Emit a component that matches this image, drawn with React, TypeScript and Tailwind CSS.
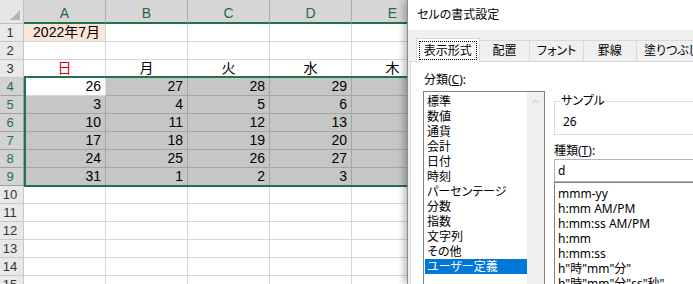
import { ChevronUp } from 'lucide-react';

const COLS = ['A', 'B', 'C', 'D', 'E', 'F'];
const DAYS = ['日', '月', '火', '水', '木', '金'];
const WEEKS = [
  [26, 27, 28, 29, 30, 1],
  [3, 4, 5, 6, 7, 8],
  [10, 11, 12, 13, 14, 15],
  [17, 18, 19, 20, 21, 22],
  [24, 25, 26, 27, 28, 29],
  [31, 1, 2, 3, 4, 5],
];
const CATEGORIES = ['標準', '数値', '通貨', '会計', '日付', '時刻', 'パーセンテージ', '分数', '指数', '文字列', 'その他', 'ユーザー定義'];
const FORMATS = ['mmm-yy', 'h:mm AM/PM', 'h:mm:ss AM/PM', 'h:mm', 'h:mm:ss', 'h"時"mm"分"', 'h"時"mm"分"ss"秒"'];
const TABS = [
  { label: '表示形式', w: 'w-[65px]' },
  { label: '配置', w: 'w-[52px]' },
  { label: 'フォント', w: 'w-[55px]' },
  { label: '罫線', w: 'w-[54px]' },
  { label: '塗りつぶし', w: 'w-[72px]' },
];

function RowHead({ n, selected }: { n: number; selected?: boolean }) {
  return (
    <div
      className={`w-[24px] shrink-0 h-[18px] border-r border-b text-[13px] leading-[17px] text-center pr-[3px] ${
        selected ? 'bg-[#d2d2d2] text-[#217346] border-[#9f9f9f]' : 'bg-[#e9e9e9] text-[#333] border-[#c8c8c8]'
      }`}
    >
      {n}
    </div>
  );
}

type Kind = 'plain' | 'sel' | 'peach';

function Cell({ children, kind = 'plain', className = '' }: { children?: React.ReactNode; kind?: Kind; className?: string }) {
  const tone =
    kind === 'sel'
      ? 'bg-[#c6c6c6] border-[#a5a5a5]'
      : kind === 'peach'
        ? 'bg-[#fce4d6] border-[#d6d6d6]'
        : 'bg-white border-[#d6d6d6]';
  return (
    <div className={`w-[82px] shrink-0 h-[18px] border-r border-b px-[4px] leading-[17px] whitespace-nowrap overflow-hidden ${tone} ${className}`}>
      {children}
    </div>
  );
}

function Sheet() {
  return (
    <div className="font-['Liberation_Sans','Noto_Sans_CJK_JP',sans-serif] text-[14px] text-black">
      {/* column headers */}
      <div className="flex h-[24px]">
        <div className="w-[24px] shrink-0 bg-[#e6e6e6] border-r border-b border-[#c0c0c0] flex items-end justify-end p-[3px]">
          <svg width="10" height="10" viewBox="0 0 10 10">
            <path d="M10 0 L10 10 L0 10 Z" fill="#b4b4b4" />
          </svg>
        </div>
        {COLS.map((c) => (
          <div
            key={c}
            className="w-[82px] shrink-0 bg-[#d6d6d6] border-r border-[#ababab] border-b-2 border-b-[#217346] text-center text-[#1f6a42] leading-[16px] pt-[5px]"
          >
            {c}
          </div>
        ))}
      </div>

      {/* row 1 */}
      <div className="flex">
        <RowHead n={1} />
        <Cell kind="peach" className="text-right pr-[5px]">2022年7月</Cell>
        {COLS.slice(1).map((c) => (
          <Cell key={c} />
        ))}
      </div>

      {/* row 2 */}
      <div className="flex">
        <RowHead n={2} />
        {COLS.map((c) => (
          <Cell key={c} />
        ))}
      </div>

      {/* row 3: weekdays */}
      <div className="flex">
        <RowHead n={3} />
        {DAYS.map((d, i) => (
          <Cell key={d} className={`text-center ${i === 0 ? 'text-[#e00000]' : ''}`}>
            {d}
          </Cell>
        ))}
      </div>

      {/* rows 4-9: dates */}
      {WEEKS.map((week, r) => (
        <div key={r} className="flex">
          <RowHead n={r + 4} selected />
          {week.map((v, i) => (
            <Cell key={i} kind={r === 0 && i === 0 ? 'plain' : 'sel'} className="text-right">
              {i < 5 ? v : ''}
            </Cell>
          ))}
        </div>
      ))}

      {/* rows 10-15 */}
      {[10, 11, 12, 13, 14, 15].map((n) => (
        <div key={n} className="flex">
          <RowHead n={n} />
          {COLS.map((c) => (
            <Cell key={c} />
          ))}
        </div>
      ))}
    </div>
  );
}

function FormatDialog() {
  return (
    <div className="absolute left-[407px] top-0 w-[300px] h-[284px] flex flex-col bg-[#f0f0f0] border-l border-[#8c8c8c] shadow-[-3px_0_7px_rgba(0,0,0,0.28)] font-['Noto_Sans','Noto_Sans_CJK_JP',sans-serif] text-[12px] text-black [font-feature-settings:'palt']">
      <div className="h-[30px] shrink-0 bg-white flex items-center pl-[9px] text-[12px]">セルの書式設定</div>

      {/* tabs */}
      <div className="h-[32px] shrink-0 flex items-end pl-[8px] border-b border-[#d9d9d9]">
        {TABS.map((t, i) =>
          i === 0 ? (
            <div key={t.label} className={`${t.w} h-[24px] -mb-px bg-white border border-b-0 border-[#d9d9d9] p-[2px] relative z-10`}>
              <div className="h-full border border-dotted border-black flex items-center justify-center">{t.label}</div>
            </div>
          ) : (
            <div key={t.label} className={`${t.w} h-[21px] border-t border-r border-[#d9d9d9] flex items-center justify-center whitespace-nowrap overflow-hidden`}>
              {t.label}
            </div>
          )
        )}
      </div>

      {/* panel */}
      <div className="flex-1 ml-[2px] bg-white border-l border-[#d9d9d9] flex">
        <div className="pl-[12px] pt-[10px] shrink-0">
          <div className="leading-[15px] pl-[1px]">
            分類(<span className="underline">C</span>):
          </div>
          <div className="mt-[4px] w-[122px] h-[200px] border border-[#828282] flex">
            <div className="flex-1 pt-[2px] pl-[1px]">
              {CATEGORIES.map((c, i) => (
                <div
                  key={c}
                  className={`leading-[15px] pl-[2px] whitespace-nowrap ${i === CATEGORIES.length - 1 ? 'bg-[#0078d7] text-white' : ''}`}
                >
                  {c}
                </div>
              ))}
            </div>
            <div className="w-[17px] bg-[#f0f0f0] flex justify-center pt-[4px]">
              <ChevronUp size={11} strokeWidth={1.5} color="#a6a6a6" />
            </div>
          </div>
        </div>

        <div className="ml-[9px] pt-[31px] flex-1 flex flex-col">
          <fieldset className="border border-[#dcdcdc] pl-[8px] pb-[5px]">
            <legend className="-ml-[3px] px-[1px] leading-[16px]">サンプル</legend>
            <div className="leading-[15px] pt-[5px]">26</div>
          </fieldset>
          <div className="mt-[8px] leading-[15px]">
            種類(<span className="underline">T</span>):
          </div>
          <div className="mt-[1px] h-[23px] border border-[#b4b4b4] pl-[3px] flex items-center">d</div>
          <div className="h-[120px] border border-[#828282] pt-[3px] pl-[3px]">
            {FORMATS.map((f) => (
              <div key={f} className="leading-[15px] whitespace-nowrap">
                {f}
              </div>
            ))}
          </div>
        </div>
      </div>
    </div>
  );
}

export default function App() {
  return (
    <div className="relative w-[693px] h-[284px] overflow-hidden bg-white">
      <Sheet />
      {/* selection frame A4:E9 */}
      <div className="absolute left-[24px] top-[76px] w-[500px] h-[111px] border-2 border-[#217346] pointer-events-none" />
      <FormatDialog />
    </div>
  );
}
